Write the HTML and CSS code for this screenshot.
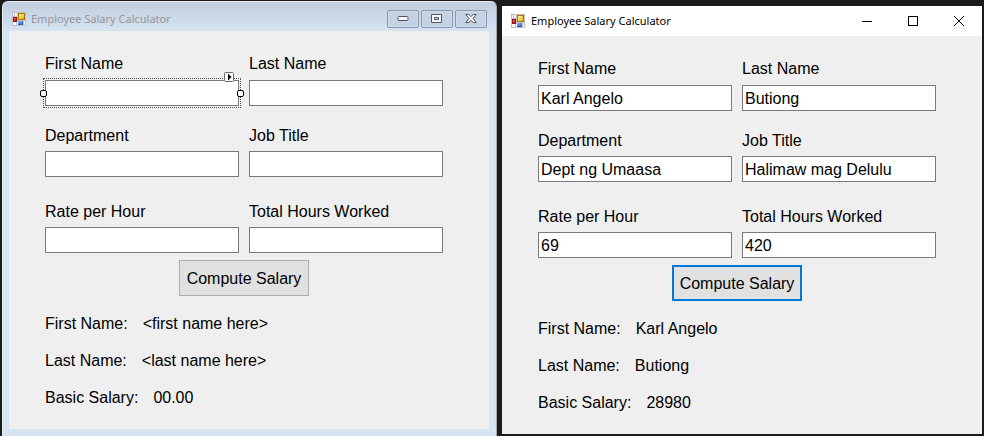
FILE: index.html
```html
<!DOCTYPE html>
<html lang="en">
<head>
<meta charset="utf-8">
<title>Employee Salary Calculator</title>
<link rel="stylesheet" href="styles.css">
</head>
<body>
<svg width="0" height="0" class="defs" aria-hidden="true">
  <defs>
    <linearGradient id="gold" x1="0" y1="0" x2="1" y2="1"><stop offset="0" stop-color="#fff0a0"/><stop offset="1" stop-color="#eeb000"/></linearGradient>
    <linearGradient id="red" x1="0" y1="0" x2="1" y2="1"><stop offset="0" stop-color="#e87060"/><stop offset="1" stop-color="#a81008"/></linearGradient>
    <linearGradient id="blue" x1="0" y1="0" x2="1" y2="1"><stop offset="0" stop-color="#8ab8ff"/><stop offset="1" stop-color="#2c62d0"/></linearGradient>
    <symbol id="form-icon" viewBox="0 0 14 14">
      <rect width="14" height="14" fill="#bfc1c4"/>
      <path fill="#f6f7f8" d="M1 1h1v3H1zM3 1h2v3H3zM1 10h3v3H1zM5 10h1v3H5zM12 9h1v4h-1z"/>
      <rect x="1" y="5" width="4" height="5" fill="#9c1510"/>
      <rect x="2" y="6" width="2" height="3" fill="url(#red)"/>
      <rect x="6" y="1" width="7" height="7" fill="#a87800"/>
      <rect x="7" y="2" width="5" height="5" fill="url(#gold)"/>
      <rect x="6" y="9" width="5" height="4" fill="#2c5cba"/>
      <rect x="6" y="9" width="5" height="3" fill="url(#blue)"/>
    </symbol>
  </defs>
</svg>
<main class="desktop">
  <section class="window designer">
    <header class="titlebar">
      <svg class="app-icon" aria-hidden="true"><use href="#form-icon"/></svg>
      <h1 class="title">Employee Salary Calculator</h1>
      <div class="controls">
        <button type="button" aria-label="Minimize"><svg width="12" height="6" viewBox="0 0 12 6"><rect x="1" y=".5" width="10" height="4" rx="1" fill="#f5f7fa" stroke="#535666"/></svg></button>
        <button type="button" aria-label="Maximize"><svg width="12" height="10" viewBox="0 0 12 10"><path fill="#f5f7fa" fill-rule="evenodd" stroke="#535666" d="M.5.5h10v8h-10zM3.5 3.5v2h4v-2z"/></svg></button>
        <button type="button" aria-label="Close"><svg width="12" height="10" viewBox="0 0 12 10"><path fill="#f5f7fa" stroke="#535666" stroke-linejoin="round" d="M.8.5h3L6 2.6 8.2.5h3L8 4.5l3.2 4h-3L6 6.4 3.8 8.5h-3L4 4.5z"/></svg></button>
      </div>
    </header>
    <form class="client">
      <div class="row row-name">
        <div class="field">
          <label for="d-first">First Name</label>
          <div class="selected">
            <input id="d-first" type="text">
            <span class="handle handle-left"></span>
            <span class="handle handle-right"></span>
            <svg class="smart-tag" width="10" height="10" viewBox="0 0 10 10" aria-hidden="true"><rect x=".5" y=".5" width="9" height="9" rx="1" fill="#fff" stroke="#696969"/><path d="M4 1.5L7.500 5 4 8.500z"/></svg>
          </div>
        </div>
        <div class="field"><label for="d-last">Last Name</label><input id="d-last" type="text"></div>
      </div>
      <div class="row row-work">
        <div class="field"><label for="d-dept">Department</label><input id="d-dept" type="text"></div>
        <div class="field"><label for="d-job">Job Title</label><input id="d-job" type="text"></div>
      </div>
      <div class="row row-pay">
        <div class="field"><label for="d-rate">Rate per Hour</label><input id="d-rate" type="text"></div>
        <div class="field"><label for="d-hours">Total Hours Worked</label><input id="d-hours" type="text"></div>
      </div>
      <button class="compute" type="button">Compute Salary</button>
      <dl class="results">
        <div><dt>First Name:</dt><dd>&lt;first name here&gt;</dd></div>
        <div><dt>Last Name:</dt><dd>&lt;last name here&gt;</dd></div>
        <div><dt>Basic Salary:</dt><dd>00.00</dd></div>
      </dl>
    </form>
  </section>

  <section class="window running">
    <header class="titlebar">
      <svg class="app-icon" aria-hidden="true"><use href="#form-icon"/></svg>
      <h1 class="title">Employee Salary Calculator</h1>
      <div class="controls">
        <button type="button" aria-label="Minimize"><svg width="10" height="10" viewBox="0 0 10 10"><path d="M0 5h10v1H0z"/></svg></button>
        <button type="button" aria-label="Maximize"><svg width="10" height="10" viewBox="0 0 10 10"><rect x=".5" y=".5" width="9" height="9" fill="none" stroke="#000"/></svg></button>
        <button type="button" aria-label="Close"><svg width="10" height="10" viewBox="0 0 10 10"><path fill="none" stroke="#000" d="M0 0l10 10M10 0L0 10"/></svg></button>
      </div>
    </header>
    <form class="client">
      <div class="row row-name">
        <div class="field"><label for="r-first">First Name</label><input id="r-first" type="text" value="Karl Angelo"></div>
        <div class="field"><label for="r-last">Last Name</label><input id="r-last" type="text" value="Butiong"></div>
      </div>
      <div class="row row-work">
        <div class="field"><label for="r-dept">Department</label><input id="r-dept" type="text" value="Dept ng Umaasa"></div>
        <div class="field"><label for="r-job">Job Title</label><input id="r-job" type="text" value="Halimaw mag Delulu"></div>
      </div>
      <div class="row row-pay">
        <div class="field"><label for="r-rate">Rate per Hour</label><input id="r-rate" type="text" value="69"></div>
        <div class="field"><label for="r-hours">Total Hours Worked</label><input id="r-hours" type="text" value="420"></div>
      </div>
      <button class="compute compute-active" type="button">Compute Salary</button>
      <dl class="results">
        <div><dt>First Name:</dt><dd>Karl Angelo</dd></div>
        <div><dt>Last Name:</dt><dd>Butiong</dd></div>
        <div><dt>Basic Salary:</dt><dd>28980</dd></div>
      </dl>
    </form>
  </section>
</main>
</body>
</html>
```
FILE: styles.css
```css
* {
  box-sizing: border-box;
}

body {
  margin: 0;
  background: #1b1b1b;
  color: #000;
  font: 16px/20px "Liberation Sans", Arial, sans-serif;
}

.defs {
  position: absolute;
}

.desktop {
  display: grid;
  grid-template-columns: minmax(0, 495fr) minmax(0, 480fr);
  gap: 5px;
  align-items: start;
  padding: 0 2px;
}

/* Window frames */
.designer {
  margin-top: 1px;
  padding: 0 7px 7px 6px;
  border: solid #e6edf5;
  border-width: 1px 1px 0;
  border-right-color: #a3a9b0;
  border-radius: 6px 6px 0 0;
  background: linear-gradient(#bfcddd, #d7e4f2 30px);
}

.running {
  margin-top: 6px;
  background: #fff;
}

.titlebar {
  display: flex;
  align-items: center;
  height: 30px;
}

.designer .titlebar {
  height: 29px;
  padding: 5px 2px 0 3px;
}

.running .titlebar {
  padding-left: 9px;
}

.app-icon {
  flex: none;
  width: 14px;
  height: 14px;
}

.title {
  flex: 1;
  margin: 0 0 0 6px;
  font: 11px/16px "Noto Sans", "Open Sans", sans-serif;
}

.designer .title {
  margin-left: 5px;
  color: #969696;
}

.controls {
  display: flex;
}

.controls button {
  display: flex;
  align-items: center;
  justify-content: center;
  padding: 0;
  border: 0;
  background: none;
}

.designer .controls {
  gap: 2px;
}

.designer .controls button {
  width: 32px;
  height: 18px;
  border: 1px solid #8795b0;
  border-radius: 2px;
  background: #c4d2e3;
  box-shadow: inset 0 0 0 1px #d0dcea;
}

.running .controls button {
  width: 46px;
  height: 28px;
}

/* Form */
.client {
  display: flex;
  flex-direction: column;
  padding: 23px 46px 21px 36px;
  background: #efefef;
}

.row {
  display: grid;
  grid-template-columns: 1fr 1fr;
  gap: 10px;
}

.row-name {
  margin-bottom: 20px;
}

.row-work {
  margin-bottom: 25px;
}

.row-pay {
  margin-bottom: 7px;
}

.field {
  display: flex;
  flex-direction: column;
  gap: 5px;
  min-width: 0;
}

.row-name .field {
  gap: 6px;
}

.field input {
  display: block;
  width: 100%;
  height: 26px;
  padding: 2px 2px 0;
  border: 1px solid #7a7a7a;
  border-radius: 0;
  background: #fff;
  color: #000;
  font: inherit;
}

.compute {
  align-self: center;
  height: 36px;
  padding: 2px 7px 0;
  border: 1px solid #adadad;
  background: #e1e1e1;
  color: #000;
  font: inherit;
}

.compute-active {
  padding: 2px 6px 0;
  border: 2px solid #0078d7;
}

.results {
  display: grid;
  gap: 17px;
  margin: 18px 0 0;
}

.results div {
  display: flex;
  gap: 15px;
}

.results dd {
  margin: 0;
}

/* Selection adorners */
.selected {
  position: relative;
}

.selected::before {
  content: "";
  position: absolute;
  inset: -2px;
  border: 1px dotted #555;
}

.handle {
  position: absolute;
  top: 10px;
  width: 7px;
  height: 7px;
  border: 1px solid #000;
  border-radius: 2px;
  background: #fff;
}

.handle-left {
  left: -5px;
}

.handle-right {
  right: -5px;
}

.smart-tag {
  position: absolute;
  top: -8px;
  right: 5px;
}
```
